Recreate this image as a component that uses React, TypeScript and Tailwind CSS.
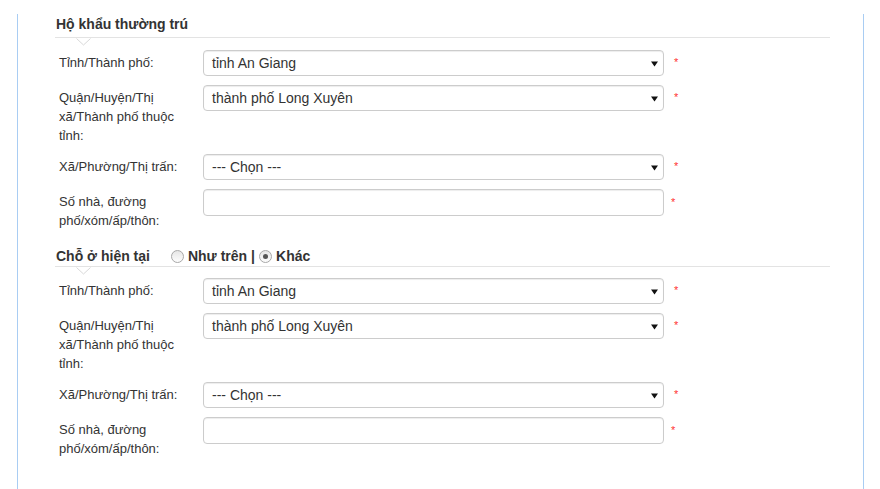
import React from "react";

const font = { fontFamily: '"Liberation Sans", Arial, sans-serif' };

function Arrow() {
  return (
    <svg className="absolute right-[5px] top-[10px]" width="7" height="6" viewBox="0 0 7 6">
      <polygon points="0,0.5 7,0.5 3.5,5.5" fill="#111" />
    </svg>
  );
}

function Star({ top = "pt-[6px]", ml = "ml-[10px]" }: { top?: string; ml?: string }) {
  return <span className={`${top} ${ml} text-[11px] leading-[12px] text-[#f33]`}>*</span>;
}

function SelectRow({ label, value }: { label: string; value: string }) {
  return (
    <div className="flex items-start mb-[9px]">
      <div className="pl-[4px] w-[148px] shrink-0">
        <div className="w-[128px] pt-[3px] text-[13px] leading-[19px] text-[#333]">{label}</div>
      </div>
      <div className="relative w-[461px] h-[26px] border border-[#ccc] rounded-[4px] bg-white shadow-[inset_0_1px_1px_rgba(0,0,0,0.075)] flex items-center pl-[8px] text-[14px] text-[#333]">
        {value}
        <Arrow />
      </div>
      <Star />
    </div>
  );
}

function InputRow({ label }: { label: string }) {
  return (
    <div className="flex items-start mb-[9px]">
      <div className="pl-[4px] w-[148px] shrink-0">
        <div className="w-[128px] pt-[3px] text-[13px] leading-[19px] text-[#333]">{label}</div>
      </div>
      <div className="w-[461px] h-[27px] border border-[#ccc] rounded-[4px] bg-white shadow-[inset_0_1px_1px_rgba(0,0,0,0.075)]" />
      <Star top="pt-[7px]" ml="ml-[7px]" />
    </div>
  );
}

function Caret() {
  return (
    <svg className="absolute left-[21px] top-[0px]" width="15" height="8" viewBox="0 0 15 8">
      <polyline points="0.5,0.5 7.5,7 14.5,0.5" fill="white" stroke="#d8d8d8" strokeWidth="1" />
    </svg>
  );
}

function Radio({ checked }: { checked?: boolean }) {
  return (
    <span className="inline-flex w-[13px] h-[13px] rounded-full border border-[#a8a8a8] bg-gradient-to-b from-[#e6e6e6] to-[#fdfdfd] items-center justify-center">
      {checked && <span className="w-[5px] h-[5px] rounded-full bg-[#555]" />}
    </span>
  );
}

function Fields() {
  return (
    <>
      <SelectRow label="Tỉnh/Thành phố:" value="tỉnh An Giang" />
      <SelectRow label="Quận/Huyện/Thị xã/Thành phố thuộc tỉnh:" value="thành phố Long Xuyên" />
      <SelectRow label="Xã/Phường/Thị trấn:" value="--- Chọn ---" />
      <InputRow label="Số nhà, đường phố/xóm/ấp/thôn:" />
    </>
  );
}

export default function App() {
  return (
    <div className="w-[880px] h-[489px] bg-white overflow-hidden" style={font}>
      <div className="ml-[17px] w-[847px] h-[489px] border-x border-[#a9cdf3] pl-[37px] pr-[33px]">
        <div className="relative mt-[14px] pb-[3px] border-b border-[#e3e3e3] text-[14px] leading-[20px] font-bold text-[#333]">
          <span className="pl-[1px]">Hộ khẩu thường trú</span>
        </div>
        <div className="relative">
          <Caret />
        </div>
        <div className="mt-[12px]">
          <Fields />
        </div>
        <div className="relative mt-[16px] border-b border-[#e3e3e3] text-[14px] leading-[20px] font-bold text-[#333] flex items-center">
          <span className="pl-[1px]">Chỗ ở hiện tại</span>
          <span className="ml-[21px] flex items-center">
            <Radio />
            <span className="ml-[4px]">Như trên</span>
            <span className="ml-[4px]">|</span>
            <span className="ml-[4px] flex items-center"><Radio checked /></span>
            <span className="ml-[4px]">Khác</span>
          </span>
        </div>
        <div className="relative">
          <Caret />
        </div>
        <div className="mt-[11px]">
          <Fields />
        </div>
      </div>
    </div>
  );
}
